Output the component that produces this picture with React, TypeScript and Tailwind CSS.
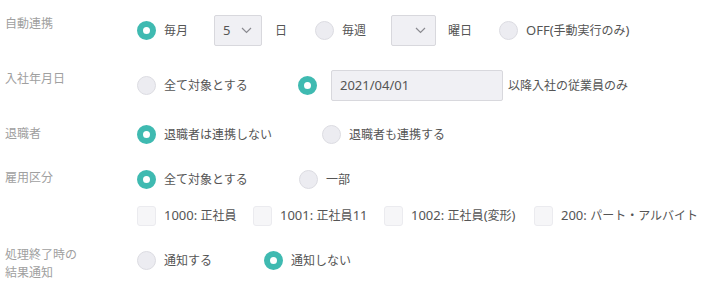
import React from "react";

const FONT = { fontFamily: '"Noto Sans", "Noto Sans CJK JP", sans-serif' };

function T({ s }: { s: string }) {
  const parts = s.split(/([\x00-\x7F]+)/).filter((p) => p.length > 0);
  return (
    <>
      {parts.map((p, i) =>
        /^[\x00-\x7F]+$/.test(p) ? (
          <span key={i} className="text-[13px]">
            {p}
          </span>
        ) : (
          <span key={i} className="text-[12px]">
            {p}
          </span>
        )
      )}
    </>
  );
}

function Radio({ checked }: { checked?: boolean }) {
  return checked ? (
    <span className="inline-block w-[19px] h-[19px] shrink-0 rounded-full border-[6px] border-[#3fbab1] bg-white" />
  ) : (
    <span className="inline-block w-[19px] h-[19px] shrink-0 rounded-full border border-[#dcdce2] bg-[#ececf1]" />
  );
}

function Option({ checked, label, w }: { checked?: boolean; label: string; w?: string }) {
  return (
    <div className={`flex items-center shrink-0 ${w ?? ""}`}>
      <Radio checked={checked} />
      <span className="ml-[8px] whitespace-nowrap">
        <T s={label} />
      </span>
    </div>
  );
}

function Check({ label, w }: { label: string; w?: string }) {
  return (
    <div className={`flex items-center shrink-0 ${w ?? ""}`}>
      <span className="inline-block w-[19px] h-[20px] shrink-0 rounded-[3px] border border-[#ebebef] bg-[#f6f6f8]" />
      <span className="ml-[8px] whitespace-nowrap">
        <T s={label} />
      </span>
    </div>
  );
}

function Chevron() {
  return (
    <svg width="11" height="7" viewBox="0 0 11 7" className="shrink-0">
      <path d="M1 1 L5.5 5.5 L10 1" fill="none" stroke="#8a8a90" strokeWidth="1.2" />
    </svg>
  );
}

function Row({
  label,
  lpt,
  cpt,
  children,
}: {
  label: React.ReactNode;
  lpt: string;
  cpt: string;
  children: React.ReactNode;
}) {
  return (
    <div className="flex items-start">
      <div className={`w-[137px] shrink-0 pl-[5px] text-[#a0a0a0] text-[12px] leading-[18px] ${lpt}`}>{label}</div>
      <div className={`flex items-center h-[31px] ${cpt}`}>{children}</div>
    </div>
  );
}

export default function App() {
  return (
    <div className="w-[708px] h-[297px] bg-white text-[13px] text-[#555] overflow-hidden" style={FONT}>
      <Row label="自動連携" lpt="pt-[15px]" cpt="pt-[15px] box-content">
        <Option checked label="毎月" w="w-[77px]" />
        <div className="flex items-center w-[101px] shrink-0">
          <div className="flex items-center justify-between w-[48px] h-[31px] rounded-[2px] border border-[#d8d8dd] bg-[#f0f0f4] pl-[8px] pr-[9px]">
            <span>5</span>
            <Chevron />
          </div>
          <span className="ml-[13px] text-[12px]">日</span>
        </div>
        <Option label="毎週" w="w-[76px]" />
        <div className="flex items-center w-[108px] shrink-0">
          <div className="flex items-center justify-end w-[45px] h-[31px] rounded-[2px] border border-[#d8d8dd] bg-[#f0f0f4] pr-[9px]">
            <Chevron />
          </div>
          <span className="ml-[12px] text-[12px]">曜日</span>
        </div>
        <Option label="OFF(手動実行のみ)" />
      </Row>
      <Row label="入社年月日" lpt="pt-[24px]" cpt="pt-[24px] box-content">
        <Option label="全て対象とする" w="w-[161px]" />
        <Radio checked />
        <div className="ml-[14px] flex items-center w-[172px] h-[31px] rounded-[2px] border border-[#d8d8dd] bg-[#f0f0f4] pl-[8px]">
          2021/04/01
        </div>
        <span className="ml-[5px] whitespace-nowrap text-[12px]">以降入社の従業員のみ</span>
      </Row>
      <Row label="退職者" lpt="pt-[24px]" cpt="pt-[18px] box-content">
        <Option checked label="退職者は連携しない" w="w-[185px]" />
        <Option label="退職者も連携する" />
      </Row>
      <Row label="雇用区分" lpt="pt-[19px]" cpt="pt-[14px] box-content">
        <Option checked label="全て対象とする" w="w-[162px]" />
        <Option label="一部" />
      </Row>
      <Row label="" lpt="pt-0" cpt="pt-[5px] box-content">
        <Check label="1000: 正社員" w="w-[116px]" />
        <Check label="1001: 正社員11" w="w-[131px]" />
        <Check label="1002: 正社員(変形)" w="w-[150px]" />
        <Check label="200: パート・アルバイト" />
      </Row>
      <Row
        label={
          <>
            処理終了時の
            <br />
            結果通知
          </>
        }
        lpt="pt-[15px]"
        cpt="pt-[14px] box-content"
      >
        <Option label="通知する" w="w-[127px]" />
        <Option checked label="通知しない" />
      </Row>
    </div>
  );
}
